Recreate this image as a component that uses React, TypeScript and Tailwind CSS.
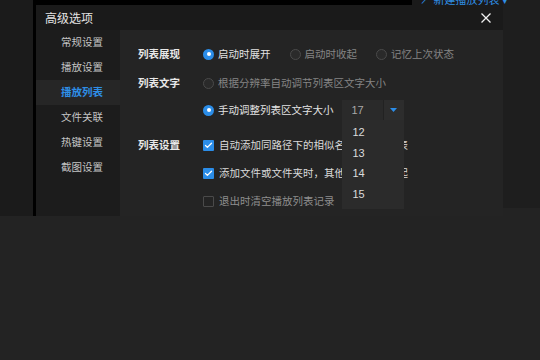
import { Check } from "lucide-react";

const menu = ["常规设置", "播放设置", "播放列表", "文件关联", "热键设置", "截图设置"];

function Radio({ on }: { on: boolean }) {
  return on ? (
    <span className="w-[11px] h-[11px] rounded-full bg-[#2b8de8] flex items-center justify-center shrink-0">
      <span className="w-[4px] h-[4px] rounded-full bg-white" />
    </span>
  ) : (
    <span className="w-[11px] h-[11px] rounded-full border border-[#4a4a4a] bg-[#2a2a2a] shrink-0" />
  );
}

function Box({ on }: { on: boolean }) {
  return on ? (
    <span className="w-[11px] h-[11px] rounded-[1px] bg-[#2b8de8] flex items-center justify-center shrink-0">
      <Check size={9} strokeWidth={3.5} color="#fff" />
    </span>
  ) : (
    <span className="w-[11px] h-[11px] rounded-[1px] border border-[#4a4a4a] shrink-0" />
  );
}

function Option({ on, label, dim }: { on: boolean; label: string; dim?: boolean }) {
  return (
    <div className="flex items-center mr-[19px]">
      <Radio on={on} />
      <span className={"ml-[4px] " + (dim ? "text-[#858585]" : "text-[#e2e2e2]")}>{label}</span>
    </div>
  );
}

export default function App() {
  return (
    <div className="w-[540px] h-[360px] bg-[#232323] relative overflow-hidden font-['Noto_Sans_CJK_SC','Noto_Sans',sans-serif] text-[10.5px] leading-none">
      <div className="flex h-[216px]">
        <div className="w-[33px] bg-[#1b1b1b]" />
        <div className="w-[3px] bg-black" />
        <div className="flex flex-col w-[467px]">
          <div className="flex h-[5px]">
            <div className="w-[376px] bg-black" />
            <div className="flex-1 bg-[#1a1a1a]" />
          </div>
          <div className="h-[25px] bg-[#1a1a1a] flex items-center justify-between pl-[9px] pr-[12px]">
            <span className="text-[12px] text-[#e4e4e4]">高级选项</span>
            <svg width="10" height="10" viewBox="0 0 10 10">
              <path d="M0.5 0.5 L9.5 9.5 M9.5 0.5 L0.5 9.5" stroke="#f0f0f0" strokeWidth="1.3" />
            </svg>
          </div>
          <div className="flex flex-1">
            <div className="w-[84px] bg-[#1c1c1c] flex flex-col">
              {menu.map((m) => (
                <div
                  key={m}
                  className={
                    "h-[25px] flex items-center pl-[25px] " +
                    (m === "播放列表" ? "bg-[#262626] text-[#2e8fe8] font-bold" : "text-[#c4c4c4]")
                  }
                >
                  {m}
                </div>
              ))}
            </div>
            <div className="flex-1 bg-[#242424] pl-[18px] pt-[14px] flex flex-col">
              <div className="flex items-center h-[20px]">
                <span className="w-[65px] font-bold text-[#e8e8e8]">列表展现</span>
                <Option on label="启动时展开" />
                <Option on={false} dim label="启动时收起" />
                <Option on={false} dim label="记忆上次状态" />
              </div>
              <div className="flex items-center h-[20px] mt-[9px]">
                <span className="w-[65px] font-bold text-[#e8e8e8]">列表文字</span>
                <Option on={false} dim label="根据分辨率自动调节列表区文字大小" />
              </div>
              <div className="flex items-center h-[20px] mt-[7px]">
                <span className="w-[65px]" />
                <Radio on />
                <span className="ml-[4px] text-[#e2e2e2]">手动调整列表区文字大小</span>
                <div className="relative ml-[8px] flex w-[62px] h-[20px]">
                  <div className="w-[41px] bg-[#2a2a2a] flex items-center pl-[10px] text-[11px] text-[#a8a8a8] font-['Liberation_Sans',sans-serif]">
                    17
                  </div>
                  <div className="flex-1 bg-[#2d2d2d] border-l border-[#222] flex items-center justify-center">
                    <svg width="7" height="4" viewBox="0 0 7 4">
                      <path d="M0 0 H7 L3.5 4 Z" fill="#2b8de8" />
                    </svg>
                  </div>
                  <div className="absolute top-full left-0 z-10 w-[62px] h-[89px] bg-[#2b2b2b] pt-[2px] font-['Liberation_Sans',sans-serif] text-[11px] text-[#dcdcdc]">
                    {["12", "13", "14", "15"].map((n) => (
                      <div key={n} className="h-[20.7px] flex items-center pl-[11px]">
                        {n}
                      </div>
                    ))}
                  </div>
                </div>
              </div>
              <div className="flex items-center h-[20px] mt-[15px]">
                <span className="w-[65px] font-bold text-[#e8e8e8]">列表设置</span>
                <Box on />
                <span className="ml-[5px] text-[#dadada] whitespace-nowrap">自动添加同路径下的相似名称文件到列表</span>
              </div>
              <div className="flex items-center h-[20px] mt-[8px]">
                <span className="w-[65px]" />
                <Box on />
                <span className="ml-[5px] text-[#dadada] whitespace-nowrap">添加文件或文件夹时，其他列表自动收起</span>
              </div>
              <div className="flex items-center h-[20px] mt-[8px]">
                <span className="w-[65px]" />
                <Box on={false} />
                <span className="ml-[5px] text-[#8e8e8e]">退出时清空播放列表记录</span>
              </div>
            </div>
          </div>
        </div>
        <div className="w-[37px] h-[208px] bg-[#1e1e1e]" />
      </div>
      <div className="absolute left-[420px] top-[-6px] text-[11px] text-[#2f8fe6] whitespace-nowrap">↗ 新建播放列表 ▾</div>
    </div>
  );
}
